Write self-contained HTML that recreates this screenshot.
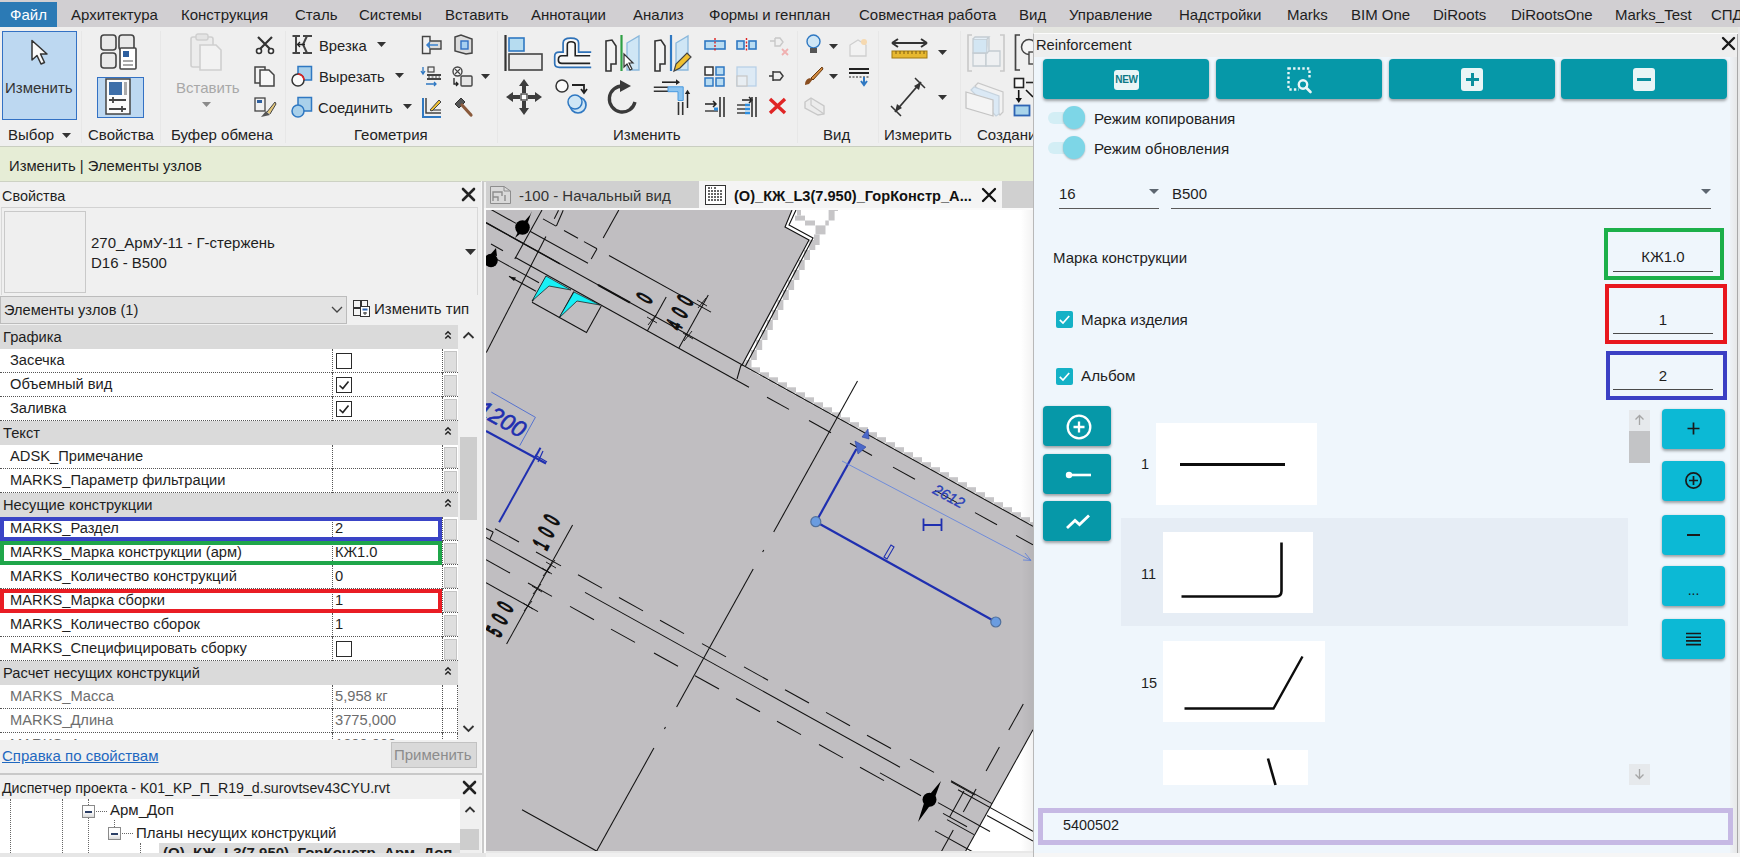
<!DOCTYPE html>
<html><head><meta charset="utf-8">
<style>
*{box-sizing:border-box;margin:0;padding:0}
html,body{width:1740px;height:857px;overflow:hidden;background:#f0f0f0;font-family:"Liberation Sans",sans-serif;color:#1e1e1e}
.a{position:absolute;white-space:nowrap}
.t{position:absolute;white-space:nowrap;font-size:15px;line-height:18px;color:#1e1e1e}
#menu{left:0;top:0;width:1740px;height:27px;background:#d1cfd2}
#ribbon{left:0;top:27px;width:1740px;height:120px;background:#efefef;border-bottom:1px solid #c9cec0}
#ctx{left:0;top:147px;width:1740px;height:35px;background:#e6edd6;border-bottom:1px solid #cdd2c4}
svg{position:absolute;overflow:visible}
</style></head><body>
<div id="menu" class="a">
<div class="a" style="left:0;top:2px;width:57px;height:25px;background:#2b7ab5"></div>
<span class="t" style="left:10px;top:6px;color:#fff">Файл</span>
<span class="t" style="left:71px;top:6px">Архитектура</span>
<span class="t" style="left:181px;top:6px">Конструкция</span>
<span class="t" style="left:295px;top:6px">Сталь</span>
<span class="t" style="left:359px;top:6px">Системы</span>
<span class="t" style="left:445px;top:6px">Вставить</span>
<span class="t" style="left:531px;top:6px">Аннотации</span>
<span class="t" style="left:633px;top:6px">Анализ</span>
<span class="t" style="left:709px;top:6px">Формы и генплан</span>
<span class="t" style="left:859px;top:6px">Совместная работа</span>
<span class="t" style="left:1019px;top:6px">Вид</span>
<span class="t" style="left:1069px;top:6px">Управление</span>
<span class="t" style="left:1179px;top:6px">Надстройки</span>
<span class="t" style="left:1287px;top:6px">Marks</span>
<span class="t" style="left:1351px;top:6px">BIM One</span>
<span class="t" style="left:1433px;top:6px">DiRoots</span>
<span class="t" style="left:1511px;top:6px">DiRootsOne</span>
<span class="t" style="left:1615px;top:6px">Marks_Test</span>
<span class="t" style="left:1711px;top:6px">СПД</span>
</div>
<div id="ctx" class="a"><span class="t" style="left:9px;top:10px;font-size:14.8px">Изменить | Элементы узлов</span></div>
<div id="ribbon" class="a"></div>
<div class="a" style="left:81px;top:31px;width:1px;height:112px;background:#e7e7e7"></div>
<div class="a" style="left:160px;top:31px;width:1px;height:112px;background:#e7e7e7"></div>
<div class="a" style="left:285px;top:31px;width:1px;height:112px;background:#e7e7e7"></div>
<div class="a" style="left:497px;top:31px;width:1px;height:112px;background:#e7e7e7"></div>
<div class="a" style="left:797px;top:31px;width:1px;height:112px;background:#e7e7e7"></div>
<div class="a" style="left:878px;top:31px;width:1px;height:112px;background:#e7e7e7"></div>
<div class="a" style="left:960px;top:31px;width:1px;height:112px;background:#e7e7e7"></div>
<span class="t" style="left:8px;top:126px;font-size:15px;color:#222">Выбор</span>
<svg style="left:62px;top:133px" width="9" height="5" viewBox="0 0 9 5"><path d="M0 0H9L4.5 5Z" fill="#333"/></svg>
<span class="t" style="left:88px;top:126px;font-size:15px;color:#222">Свойства</span>
<span class="t" style="left:171px;top:126px;font-size:15px;color:#222">Буфер обмена</span>
<span class="t" style="left:354px;top:126px;font-size:15px;color:#222">Геометрия</span>
<span class="t" style="left:613px;top:126px;font-size:15px;color:#222">Изменить</span>
<span class="t" style="left:823px;top:126px;font-size:15px;color:#222">Вид</span>
<span class="t" style="left:884px;top:126px;font-size:15px;color:#222">Измерить</span>
<span class="t" style="left:977px;top:126px;font-size:15px;color:#222">Создани</span>
<div class="a" style="left:2px;top:31px;width:75px;height:89px;background:#bdd8f1;border:1.5px solid #3371c4"></div>
<svg style="left:30px;top:39px" width="18" height="27" viewBox="0 0 18 27"><path d="M2 1.5V21L7 16.5L11 25L14.5 23.5L10.5 15H17Z" fill="#fafafa" stroke="#333" stroke-width="1.5" stroke-linejoin="round"/></svg>
<span class="t" style="left:5px;top:79px;font-size:15px;color:#333">Изменить</span>
<svg style="left:100px;top:33px" width="38" height="38" viewBox="0 0 38 38"><g fill="#e9e9e9" stroke="#444" stroke-width="1.6"><rect x="1" y="2" width="15" height="15" rx="3"/><rect x="19" y="2" width="15" height="15" rx="3"/><rect x="1" y="20" width="15" height="15" rx="3"/></g><rect x="20" y="15" width="16" height="21" rx="1" fill="#fff" stroke="#444" stroke-width="1.6"/><rect x="23" y="18" width="6" height="6" fill="#2d5f9e"/><path d="M23 28h10M23 32h10" stroke="#555" stroke-width="1.2"/></svg>
<div class="a" style="left:97px;top:77px;width:47px;height:41px;background:#bdd8f1;border:1.5px solid #3371c4"></div>
<svg style="left:105px;top:78px" width="26" height="37" viewBox="0 0 26 37"><rect x="1" y="1" width="24" height="35" fill="#fbfbfb" stroke="#444" stroke-width="1.5"/><rect x="4" y="4" width="13" height="13" fill="#3d6ea8"/><rect x="19" y="4" width="3" height="13" fill="#aaa"/><path d="M4 22H21M4 31H21M8 19V25M17 28V34" stroke="#444" stroke-width="1.8"/></svg>
<svg style="left:189px;top:33px" width="34" height="38" viewBox="0 0 34 38"><rect x="2" y="4" width="22" height="30" rx="2" fill="#ececec" stroke="#cfcfcf" stroke-width="1.6"/><rect x="7" y="1" width="12" height="6" rx="2" fill="#e4e4e4" stroke="#cfcfcf" stroke-width="1.4"/><path d="M11 12H27L32 17V37H11Z" fill="#f2f2f2" stroke="#cfcfcf" stroke-width="1.6"/></svg>
<span class="t" style="left:176px;top:79px;font-size:15px;color:#a8a8a8">Вставить</span>
<svg style="left:202px;top:102px" width="9" height="5" viewBox="0 0 9 5"><path d="M0 0H9L4.5 5Z" fill="#8a8a8a"/></svg>
<svg style="left:255px;top:35px" width="20" height="19" viewBox="0 0 20 19"><path d="M3 2L16 15M17 2L4 15" stroke="#333" stroke-width="2.2"/><circle cx="4" cy="16" r="2.5" fill="#fff" stroke="#333" stroke-width="1.6"/><circle cx="16" cy="16" r="2.5" fill="#fff" stroke="#333" stroke-width="1.6"/></svg>
<svg style="left:254px;top:66px" width="22" height="21" viewBox="0 0 22 21"><path d="M1 1H11V17H1Z" fill="#f4f4f4" stroke="#444" stroke-width="1.5"/><path d="M6 4H15L20 9V20H6Z" fill="#f7f7f7" stroke="#444" stroke-width="1.5"/></svg>
<svg style="left:254px;top:97px" width="22" height="21" viewBox="0 0 22 21"><rect x="1" y="1" width="10" height="13" fill="#f0f0f0" stroke="#444" stroke-width="1.3"/><rect x="3" y="3" width="5" height="3" fill="#2e5f9f"/><path d="M7 20L12 14L16 18Z" fill="#555"/><path d="M13 15L21 5L22 7L16 17" fill="#e4c77a" stroke="#444" stroke-width="1"/></svg>
<svg style="left:291px;top:34px" width="22" height="21" viewBox="0 0 22 21"><path d="M1.5 2H9M1.5 19H9M5 2V19M12 2H21M12 19H21M16 2L12 10.5L16 19" fill="none" stroke="#444" stroke-width="2"/><path d="M14 10.5H7M9 8L6.5 10.5L9 13" stroke="#222" stroke-width="1.3" fill="none"/></svg>
<span class="t" style="left:319px;top:37px;font-size:14.8px;color:#222">Врезка</span>
<svg style="left:377px;top:42px" width="9" height="5" viewBox="0 0 9 5"><path d="M0 0H9L4.5 5Z" fill="#333"/></svg>
<svg style="left:291px;top:65px" width="22" height="22" viewBox="0 0 22 22"><rect x="7" y="1.5" width="13.5" height="13.5" fill="#a9d0ea" stroke="#2f78c2" stroke-width="1.5"/><circle cx="7" cy="15" r="6" fill="#fafafa" stroke="#333" stroke-width="1.5"/><path d="M7 9A6 6 0 0 1 13 15" stroke="#e02020" stroke-width="1.7" fill="none"/></svg>
<span class="t" style="left:319px;top:68px;font-size:14.8px;color:#222">Вырезать</span>
<svg style="left:395px;top:73px" width="9" height="5" viewBox="0 0 9 5"><path d="M0 0H9L4.5 5Z" fill="#333"/></svg>
<svg style="left:291px;top:96px" width="22" height="22" viewBox="0 0 22 22"><rect x="7" y="1.5" width="13.5" height="13.5" fill="#a9d0ea" stroke="#2f78c2" stroke-width="1.5"/><circle cx="7" cy="15" r="6" fill="#a9d0ea" stroke="#2f78c2" stroke-width="1.5"/></svg>
<span class="t" style="left:318px;top:99px;font-size:14.8px;color:#222">Соединить</span>
<svg style="left:403px;top:104px" width="9" height="5" viewBox="0 0 9 5"><path d="M0 0H9L4.5 5Z" fill="#333"/></svg>
<svg style="left:421px;top:35px" width="21" height="20" viewBox="0 0 21 20"><path d="M1.5 1.5H9V18.5H1.5Z" fill="#f2f2f2" stroke="#444" stroke-width="1.4"/><path d="M9 6H20V14H9" fill="#dcdcdc" stroke="#444" stroke-width="1.4"/><path d="M17 10H6M9 7L6 10L9 13" stroke="#3a82d0" stroke-width="1.5" fill="none"/></svg>
<svg style="left:453px;top:34px" width="20" height="21" viewBox="0 0 20 21"><path d="M2 3L8 1L19 5V19L13 20L2 17Z" fill="#dcdcdc" stroke="#444" stroke-width="1.5"/><rect x="8" y="7" width="7" height="8" fill="#a7cff0" stroke="#2f6fc4" stroke-width="1.4"/></svg>
<svg style="left:421px;top:66px" width="21" height="21" viewBox="0 0 21 21"><path d="M2 1V7M0 5L2 8L4 5" stroke="#2f78c2" stroke-width="1.3" fill="none"/><rect x="7" y="1" width="6" height="5" fill="none" stroke="#444" stroke-width="1.2"/><path d="M6 9H20M6 13H20" stroke="#444" stroke-width="1.8"/><path d="M7 11H19" stroke="#444" stroke-width="1" stroke-dasharray="2 1.5"/><path d="M5 18H15M13 16L15 18L13 20" stroke="#2f78c2" stroke-width="1.3" fill="none"/></svg>
<svg style="left:452px;top:66px" width="21" height="21" viewBox="0 0 21 21"><circle cx="5.5" cy="5.5" r="4.5" fill="#f4f4f4" stroke="#444" stroke-width="1.4"/><path d="M3 3L8 8M8 3L3 8" stroke="#444" stroke-width="1.1"/><rect x="9" y="10" width="11" height="10" rx="1" fill="#e6e6e6" stroke="#444" stroke-width="1.4"/><path d="M2 12V18H6M4 16L6 18L4 20" stroke="#222" stroke-width="1.3" fill="none"/></svg>
<svg style="left:481px;top:74px" width="9" height="5" viewBox="0 0 9 5"><path d="M0 0H9L4.5 5Z" fill="#333"/></svg>
<svg style="left:421px;top:97px" width="21" height="21" viewBox="0 0 21 21"><path d="M2 1V20H20" stroke="#2f78c2" stroke-width="2" fill="none"/><path d="M5 1V16H20" stroke="#444" stroke-width="1.5" fill="none"/><path d="M9 13H20" stroke="#444" stroke-width="1.2"/><path d="M9 13L18 3L20 5L11 14Z" fill="#f0c030" stroke="#444" stroke-width="1"/></svg>
<svg style="left:453px;top:97px" width="20" height="21" viewBox="0 0 20 21"><path d="M2 7L8 1L12 5L6 11Z" fill="#555" stroke="#333" stroke-width="1"/><path d="M9 8L18 18" stroke="#8a5a3c" stroke-width="3.2" stroke-linecap="round"/></svg>
<svg style="left:504px;top:34px" width="38" height="38" viewBox="0 0 38 38"><path d="M1.5 1V37" stroke="#333" stroke-width="2.2"/><rect x="5" y="4" width="15" height="13" fill="#b6dcf0" stroke="#2f78c2" stroke-width="1.6"/><rect x="5" y="20" width="33" height="16" fill="#ececec" stroke="#444" stroke-width="1.6"/></svg>
<svg style="left:553px;top:37px" width="40" height="32" viewBox="0 0 40 32"><path d="M38.2 15.1H25.6V6.1Q25.6 1.1 17.7 1.1Q10.1 1.1 10.1 6.1V15.1H6.2Q1.7 15.1 1.7 19.3V26.6Q1.7 30.3 6.2 30.3H38.2Z" fill="#f7f7f7" stroke="none"/><path d="M38.2 15.1H25.6V6.1Q25.6 1.1 17.7 1.1Q10.1 1.1 10.1 6.1V15.1H6.2Q1.7 15.1 1.7 19.3V26.6Q1.7 30.3 6.2 30.3H38.2" fill="none" stroke="#2f72b8" stroke-width="1.7"/><path d="M37.2 18.7H22.2V7.7Q22.2 4.8 18 4.8Q14.3 4.8 14.3 7.7V18.7H8.8Q5.4 18.7 5.4 22.4V23.5Q5.4 26.4 8.8 26.4H37.2" fill="none" stroke="#222" stroke-width="1.6"/></svg>
<svg style="left:604px;top:34px" width="37" height="38" viewBox="0 0 37 38"><path d="M2 7L8 6L12 12V30H7V37H2Z" fill="#f2f2f2" stroke="#333" stroke-width="1.6"/><path d="M17.5 1V37" stroke="#2ea043" stroke-width="2.2"/><path d="M23 9L35 2V36L23 36Z" fill="#cfe6f5" stroke="#8ab8dc" stroke-width="1.3"/><path d="M20 20V33L23 30L26 36L28 35L25 29H29Z" fill="#fff" stroke="#333" stroke-width="1.2"/></svg>
<svg style="left:653px;top:34px" width="38" height="38" viewBox="0 0 38 38"><path d="M2 7L8 6L12 12V30H7V37H2Z" fill="#f2f2f2" stroke="#333" stroke-width="1.6"/><path d="M18 1V37" stroke="#2f78c2" stroke-width="2.2"/><path d="M23 9L35 2V36L23 36Z" fill="#cfe6f5" stroke="#8ab8dc" stroke-width="1.3"/><path d="M21 37L23 30L34 19L38 23L27 34Z" fill="#f0c030" stroke="#444" stroke-width="1.2"/></svg>
<svg style="left:505px;top:78px" width="38" height="38" viewBox="0 0 38 38"><path d="M19 1L24 8H21V15H17V8H14ZM19 37L14 30H17V23H21V30H24ZM1 19L8 14V17H15V21H8V24ZM37 19L30 24V21H23V17H30V14Z" fill="#3d3d3d"/><rect x="16" y="16" width="6" height="6" fill="#fff" stroke="#3d3d3d" stroke-width="1.3"/></svg>
<svg style="left:555px;top:79px" width="36" height="36" viewBox="0 0 36 36"><circle cx="7" cy="7" r="6" fill="#fafafa" stroke="#333" stroke-width="1.5"/><path d="M17 6H29V13M26 10L29 14L32 10" stroke="#222" stroke-width="1.8" fill="none"/><circle cx="23" cy="26" r="8" fill="#cfe6f5" stroke="#2f78c2" stroke-width="1.7"/><circle cx="20" cy="23" r="7" fill="#cfe6f5" stroke="#2f78c2" stroke-width="1.5"/></svg>
<svg style="left:606px;top:80px" width="34" height="35" viewBox="0 0 34 35"><path d="M29 22A13 13 0 1 1 17 6" fill="none" stroke="#3a3a3a" stroke-width="3.3"/><path d="M14 0L25 6L14 12Z" fill="#3a3a3a"/></svg>
<svg style="left:652px;top:79px" width="40" height="38" viewBox="0 0 40 38"><path d="M10 3.2H25" stroke="#222" stroke-width="1.6"/><path d="M24 0.3L28 3.2L24 6.1Z" fill="#222"/><path d="M1.8 8.3H16M1.8 12.2H16" stroke="#333" stroke-width="1.5"/><path d="M16 7.8H31.2V21.5H26V12.7H16Z" fill="#8cc4f0" stroke="#4a9be0" stroke-width="1"/><path d="M26.5 23V36M30.7 23V36" stroke="#333" stroke-width="1.6"/><path d="M35.5 29V13" stroke="#222" stroke-width="1.5"/><path d="M32.8 15L35.5 10.8L38.2 15Z" fill="#222"/></svg>
<svg style="left:704px;top:38px" width="22" height="14" viewBox="0 0 22 14"><rect x="1" y="3" width="20" height="8" fill="#b9dcf2" stroke="#2f78c2" stroke-width="1.6"/><path d="M11 0V14" stroke="#e02020" stroke-width="1.4" stroke-dasharray="2 1.5"/></svg>
<svg style="left:736px;top:38px" width="21" height="14" viewBox="0 0 21 14"><rect x="1" y="3" width="7" height="8" fill="#b9dcf2" stroke="#2f78c2" stroke-width="1.6"/><rect x="13" y="3" width="7" height="8" fill="#b9dcf2" stroke="#2f78c2" stroke-width="1.6"/><path d="M10.5 0V14" stroke="#e02020" stroke-width="1.4" stroke-dasharray="2 1.5"/></svg>
<svg style="left:769px;top:37px" width="22" height="20" viewBox="0 0 22 20"><path d="M1 4H6M6 1V9H11L14 5L11 1H6" fill="none" stroke="#c8c8c8" stroke-width="1.4"/><path d="M13 12L19 18M19 12L13 18" stroke="#f0b0b0" stroke-width="1.8"/></svg>
<svg style="left:704px;top:66px" width="21" height="21" viewBox="0 0 21 21"><rect x="1" y="1" width="8" height="8" fill="#fafafa" stroke="#333" stroke-width="1.5"/><rect x="12" y="1" width="8" height="8" fill="#b9dcf2" stroke="#2f78c2" stroke-width="1.5"/><rect x="1" y="12" width="8" height="8" fill="#b9dcf2" stroke="#2f78c2" stroke-width="1.5"/><rect x="12" y="12" width="8" height="8" fill="#b9dcf2" stroke="#2f78c2" stroke-width="1.5"/></svg>
<svg style="left:736px;top:66px" width="21" height="21" viewBox="0 0 21 21"><rect x="1" y="1" width="19" height="19" fill="#ddeaf5" stroke="#b8d0e6" stroke-width="1.3"/><rect x="1" y="10" width="10" height="10" fill="#e8eef3" stroke="#c6c6c6" stroke-width="1.2"/></svg>
<svg style="left:768px;top:69px" width="18" height="14" viewBox="0 0 18 14"><path d="M1 7H5M5 2V12M5 3H12L15 7L12 11H5" fill="none" stroke="#3a3a3a" stroke-width="1.5"/></svg>
<svg style="left:704px;top:96px" width="22" height="21" viewBox="0 0 22 21"><path d="M1 8H12M9 5L12 8L9 11" stroke="#222" stroke-width="1.5" fill="none"/><path d="M1 15H14" stroke="#444" stroke-width="1.5"/><path d="M10 13H14" stroke="#2f8fe0" stroke-width="3"/><path d="M16 1V21M20 1V21" stroke="#333" stroke-width="1.6"/></svg>
<svg style="left:736px;top:96px" width="22" height="21" viewBox="0 0 22 21"><path d="M6 4H16M13 1L16 4L13 7" stroke="#222" stroke-width="1.5" fill="none"/><path d="M1 9H13M1 13H13M1 17H13" stroke="#444" stroke-width="1.4"/><path d="M9 9H14M9 13H14M9 17H14" stroke="#2f8fe0" stroke-width="2.4"/><path d="M16 1V21M20 1V21" stroke="#333" stroke-width="1.6"/></svg>
<svg style="left:768px;top:97px" width="19" height="18" viewBox="0 0 19 18"><path d="M2 2L17 16M17 2L2 16" stroke="#e02525" stroke-width="3.4"/></svg>
<svg style="left:805px;top:34px" width="17" height="22" viewBox="0 0 17 22"><circle cx="8.5" cy="7.5" r="6.5" fill="#cfe6f5" stroke="#2f78c2" stroke-width="1.4"/><path d="M5 14H12V19H5Z" fill="#555"/></svg>
<svg style="left:829px;top:44px" width="9" height="5" viewBox="0 0 9 5"><path d="M0 0H9L4.5 5Z" fill="#333"/></svg>
<svg style="left:848px;top:38px" width="22" height="19" viewBox="0 0 22 19"><path d="M2 18V7L10 2L18 7V18Z" fill="#f2f2f2" stroke="#cfcfcf" stroke-width="1.3"/><circle cx="16" cy="4" r="3" fill="#f6d9b0"/></svg>
<svg style="left:804px;top:65px" width="20" height="21" viewBox="0 0 20 21"><path d="M1 20C1 14 5 12 9 14L5 19Z" fill="#8a4e20"/><path d="M7 13L18 2L19 4L9 15Z" fill="#d08a40" stroke="#6a3a10" stroke-width="1"/></svg>
<svg style="left:829px;top:74px" width="9" height="5" viewBox="0 0 9 5"><path d="M0 0H9L4.5 5Z" fill="#333"/></svg>
<svg style="left:848px;top:67px" width="22" height="19" viewBox="0 0 22 19"><path d="M1 2H21M1 6H21" stroke="#222" stroke-width="2"/><path d="M1 10H21" stroke="#222" stroke-width="1.2" stroke-dasharray="2 1.5"/><path d="M16 10V17M13 14L16 18L19 14" stroke="#2f78c2" stroke-width="2" fill="none"/></svg>
<svg style="left:803px;top:96px" width="23" height="20" viewBox="0 0 23 20"><path d="M2 6L8 2L21 10V18L15 19L2 12Z" fill="#ececec" stroke="#c8c8c8" stroke-width="1.4"/><path d="M8 2V9L21 18" fill="none" stroke="#c8c8c8" stroke-width="1.2"/></svg>
<svg style="left:890px;top:38px" width="39" height="22" viewBox="0 0 39 22"><path d="M2 5H37M2 5L8 1M2 5L8 9M37 5L31 1M37 5L31 9" stroke="#333" stroke-width="2" fill="none"/><rect x="2" y="13" width="35" height="7" fill="#e7b830" stroke="#a07810" stroke-width="1"/><path d="M6 13V16M10 13V16M14 13V16M18 13V16M22 13V16M26 13V16M30 13V16M34 13V16" stroke="#7a5a10" stroke-width="1"/></svg>
<svg style="left:938px;top:50px" width="9" height="5" viewBox="0 0 9 5"><path d="M0 0H9L4.5 5Z" fill="#333"/></svg>
<svg style="left:891px;top:78px" width="34" height="38" viewBox="0 0 34 38"><path d="M4 34L30 4" stroke="#333" stroke-width="1.8"/><path d="M4 34L6 26L11 30ZM30 4L28 12L23 8Z" fill="#333"/><path d="M0 28L10 38M24 0L34 10" stroke="#333" stroke-width="1.5"/></svg>
<svg style="left:938px;top:95px" width="9" height="5" viewBox="0 0 9 5"><path d="M0 0H9L4.5 5Z" fill="#333"/></svg>
<svg style="left:966px;top:34px" width="40" height="38" viewBox="0 0 40 38"><path d="M6 1H2V37H6M34 1H38V37H34" stroke="#c9c9c9" stroke-width="1.6" fill="none"/><g stroke="#c4ccd2" stroke-width="1.3"><path d="M7 32V19H20V32Z" fill="#eef0f2"/><path d="M20 32V17H34V32Z" fill="#eef0f2"/><path d="M7 19V5H21V19Z" fill="#d3e6f3"/><path d="M7 5L9 3H23L21 5M21 19L23 17V3" fill="#e4eef6"/></g></svg>
<svg style="left:965px;top:78px" width="40" height="40" viewBox="0 0 40 40"><path d="M10 8L13 5L38 14V34L35 37Z" fill="#f2f2f2" stroke="#c8c8c8" stroke-width="1.2"/><path d="M6 12L9 9L34 18V36L31 38Z" fill="#dbe9f5" stroke="#c6d3de" stroke-width="1.2"/><path d="M1 14L28 22V38L1 30Z" fill="#f4f4f4" stroke="#c4c4c4" stroke-width="1.3"/></svg>
<svg style="left:1014px;top:34px" width="20" height="38" viewBox="0 0 20 38"><path d="M6 1H1.5V36H6" stroke="#444" stroke-width="1.7" fill="none"/><circle cx="15" cy="13" r="7.5" fill="#f5f5f5" stroke="#444" stroke-width="1.5"/><rect x="15" y="18" width="6" height="12" fill="#f0f0f0" stroke="#444" stroke-width="1.4"/></svg>
<svg style="left:1013px;top:77px" width="21" height="40" viewBox="0 0 21 40"><rect x="1.5" y="1.5" width="9" height="9" fill="#fafafa" stroke="#222" stroke-width="1.6"/><path d="M13 5.5H21" stroke="#222" stroke-width="1.6"/><path d="M5.7 13V23" stroke="#111" stroke-width="1.6"/><path d="M2.5 21L5.7 26L9 21Z" fill="#111"/><path d="M13 13L20 20" stroke="#111" stroke-width="1.6"/><rect x="1.5" y="28.5" width="15" height="10" fill="#a9d4ea" stroke="#2e64b4" stroke-width="1.8"/></svg>
<div class="a" style="left:0;top:182px;width:482px;height:675px;background:#f0f0f0"></div>
<div class="a" style="left:481px;top:181px;width:1px;height:676px;background:#f6f6f6"></div>
<div class="a" style="left:482px;top:181px;width:2px;height:676px;background:#cacaca"></div>
<div class="a" style="left:484px;top:208px;width:2px;height:645px;background:#fbfbfb"></div>
<span class="t" style="left:2px;top:187px;font-size:14.4px">Свойства</span>
<svg style="left:462px;top:188px" width="13" height="13" viewBox="0 0 13 13"><path d="M1 1L12 12M12 1L1 12" stroke="#222" stroke-width="2.6" stroke-linecap="round"/></svg>
<div class="a" style="left:1px;top:207px;width:477px;height:88px;border-top:1px solid #d2d2d2;border-left:1px solid #d8d8d8;border-right:1px solid #d8d8d8"></div>
<div class="a" style="left:4px;top:211px;width:82px;height:82px;border:1px solid #c9c9c9;background:#efefef"></div>
<span class="t" style="left:91px;top:234px">270_АрмУ-11 - Г-стержень</span>
<span class="t" style="left:91px;top:254px">D16 - B500</span>
<svg style="left:465px;top:249px" width="11" height="6"><path d="M0 0H11L5.5 6Z" fill="#333"/></svg>
<div class="a" style="left:0;top:296px;width:347px;height:28px;background:#e3e3e3;border:1px solid #bcbcbc"></div>
<span class="t" style="left:4px;top:301px;font-size:14.6px">Элементы узлов (1)</span>
<svg style="left:331px;top:306px" width="12" height="7"><path d="M1 1L6 6L11 1" stroke="#444" stroke-width="1.3" fill="none"/></svg>
<svg style="left:353px;top:300px" width="17" height="17" viewBox="0 0 17 17"><rect x="0.5" y="0.5" width="7" height="7" fill="#f4f4f4" stroke="#333"/><rect x="0.5" y="8.5" width="7" height="7" fill="#f4f4f4" stroke="#333"/><rect x="8.5" y="0.5" width="6" height="7" fill="#f4f4f4" stroke="#333"/><rect x="7.5" y="6.5" width="9" height="10" fill="#fff" stroke="#333"/><rect x="9.5" y="8.5" width="5" height="2" fill="#2d64b0"/><path d="M10 13h4M12 12v3" stroke="#333" stroke-width="1"/></svg>
<span class="t" style="left:374px;top:300px;font-size:15px">Изменить тип</span>
<div class="a" style="left:0;top:325px;width:458px;height:415px;overflow:hidden;background:#fff">
<div class="a" style="left:0;top:0px;width:458px;height:24px;background:#dadada"></div>
<span class="t" style="left:3px;top:3px;font-size:14.7px">Графика</span>
<svg style="left:444px;top:5px" width="8" height="10" viewBox="0 0 8 10"><path d="M1.3 4.5L4 1.8L6.7 4.5M1.3 8.5L4 5.8L6.7 8.5" stroke="#222" stroke-width="1.5" fill="none"/></svg>
<div class="a" style="left:0;top:24px;width:458px;height:24px;background:#fff;border-bottom:1px dotted #555"></div>
<div class="a" style="left:332px;top:24px;width:1px;height:24px;border-left:1px dotted #555"></div>
<div class="a" style="left:442px;top:24px;width:1px;height:24px;border-left:1px dotted #555"></div>
<div class="a" style="left:444px;top:26px;width:13px;height:21px;background:#dedede;border:1px solid #c4c4c4"></div>
<span class="t" style="left:10px;top:26px;font-size:14.7px;color:#1e1e1e">Засечка</span>
<div class="a" style="left:336px;top:28px;width:16px;height:16px;border:1.6px solid #2a2a2a;background:#fff"></div>
<div class="a" style="left:0;top:48px;width:458px;height:24px;background:#fff;border-bottom:1px dotted #555"></div>
<div class="a" style="left:332px;top:48px;width:1px;height:24px;border-left:1px dotted #555"></div>
<div class="a" style="left:442px;top:48px;width:1px;height:24px;border-left:1px dotted #555"></div>
<div class="a" style="left:444px;top:50px;width:13px;height:21px;background:#dedede;border:1px solid #c4c4c4"></div>
<span class="t" style="left:10px;top:50px;font-size:14.7px;color:#1e1e1e">Объемный вид</span>
<div class="a" style="left:336px;top:52px;width:16px;height:16px;border:1.6px solid #2a2a2a;background:#fff"></div>
<svg style="left:338px;top:54px" width="12" height="12"><path d="M1.5 6.5L4.8 9.5L10.5 2.5" stroke="#222" stroke-width="1.6" fill="none"/></svg>
<div class="a" style="left:0;top:72px;width:458px;height:24px;background:#fff;border-bottom:1px dotted #555"></div>
<div class="a" style="left:332px;top:72px;width:1px;height:24px;border-left:1px dotted #555"></div>
<div class="a" style="left:442px;top:72px;width:1px;height:24px;border-left:1px dotted #555"></div>
<div class="a" style="left:444px;top:74px;width:13px;height:21px;background:#dedede;border:1px solid #c4c4c4"></div>
<span class="t" style="left:10px;top:74px;font-size:14.7px;color:#1e1e1e">Заливка</span>
<div class="a" style="left:336px;top:76px;width:16px;height:16px;border:1.6px solid #2a2a2a;background:#fff"></div>
<svg style="left:338px;top:78px" width="12" height="12"><path d="M1.5 6.5L4.8 9.5L10.5 2.5" stroke="#222" stroke-width="1.6" fill="none"/></svg>
<div class="a" style="left:0;top:96px;width:458px;height:24px;background:#dadada"></div>
<span class="t" style="left:3px;top:99px;font-size:14.7px">Текст</span>
<svg style="left:444px;top:101px" width="8" height="10" viewBox="0 0 8 10"><path d="M1.3 4.5L4 1.8L6.7 4.5M1.3 8.5L4 5.8L6.7 8.5" stroke="#222" stroke-width="1.5" fill="none"/></svg>
<div class="a" style="left:0;top:120px;width:458px;height:24px;background:#fff;border-bottom:1px dotted #555"></div>
<div class="a" style="left:332px;top:120px;width:1px;height:24px;border-left:1px dotted #555"></div>
<div class="a" style="left:442px;top:120px;width:1px;height:24px;border-left:1px dotted #555"></div>
<div class="a" style="left:444px;top:122px;width:13px;height:21px;background:#dedede;border:1px solid #c4c4c4"></div>
<span class="t" style="left:10px;top:122px;font-size:14.7px;color:#1e1e1e">ADSK_Примечание</span>
<div class="a" style="left:0;top:144px;width:458px;height:24px;background:#fff;border-bottom:1px dotted #555"></div>
<div class="a" style="left:332px;top:144px;width:1px;height:24px;border-left:1px dotted #555"></div>
<div class="a" style="left:442px;top:144px;width:1px;height:24px;border-left:1px dotted #555"></div>
<div class="a" style="left:444px;top:146px;width:13px;height:21px;background:#dedede;border:1px solid #c4c4c4"></div>
<span class="t" style="left:10px;top:146px;font-size:14.7px;color:#1e1e1e">MARKS_Параметр фильтрации</span>
<div class="a" style="left:0;top:168px;width:458px;height:24px;background:#dadada"></div>
<span class="t" style="left:3px;top:171px;font-size:14.7px">Несущие конструкции</span>
<svg style="left:444px;top:173px" width="8" height="10" viewBox="0 0 8 10"><path d="M1.3 4.5L4 1.8L6.7 4.5M1.3 8.5L4 5.8L6.7 8.5" stroke="#222" stroke-width="1.5" fill="none"/></svg>
<div class="a" style="left:0;top:192px;width:458px;height:24px;background:#fff;border-bottom:1px dotted #555"></div>
<div class="a" style="left:332px;top:192px;width:1px;height:24px;border-left:1px dotted #555"></div>
<div class="a" style="left:442px;top:192px;width:1px;height:24px;border-left:1px dotted #555"></div>
<div class="a" style="left:444px;top:194px;width:13px;height:21px;background:#dedede;border:1px solid #c4c4c4"></div>
<span class="t" style="left:10px;top:194px;font-size:14.7px;color:#1e1e1e">MARKS_Раздел</span>
<span class="t" style="left:335px;top:194px;font-size:14.7px;color:#1e1e1e">2</span>
<div class="a" style="left:0;top:192px;width:442px;height:24px;border:4.5px solid #3a44c6"></div>
<div class="a" style="left:0;top:216px;width:458px;height:24px;background:#fff;border-bottom:1px dotted #555"></div>
<div class="a" style="left:332px;top:216px;width:1px;height:24px;border-left:1px dotted #555"></div>
<div class="a" style="left:442px;top:216px;width:1px;height:24px;border-left:1px dotted #555"></div>
<div class="a" style="left:444px;top:218px;width:13px;height:21px;background:#dedede;border:1px solid #c4c4c4"></div>
<span class="t" style="left:10px;top:218px;font-size:14.7px;color:#1e1e1e">MARKS_Марка конструкции (арм)</span>
<span class="t" style="left:335px;top:218px;font-size:14.7px;color:#1e1e1e">КЖ1.0</span>
<div class="a" style="left:0;top:216px;width:442px;height:24px;border:4.5px solid #1fa64a"></div>
<div class="a" style="left:0;top:240px;width:458px;height:24px;background:#fff;border-bottom:1px dotted #555"></div>
<div class="a" style="left:332px;top:240px;width:1px;height:24px;border-left:1px dotted #555"></div>
<div class="a" style="left:442px;top:240px;width:1px;height:24px;border-left:1px dotted #555"></div>
<div class="a" style="left:444px;top:242px;width:13px;height:21px;background:#dedede;border:1px solid #c4c4c4"></div>
<span class="t" style="left:10px;top:242px;font-size:14.7px;color:#1e1e1e">MARKS_Количество конструкций</span>
<span class="t" style="left:335px;top:242px;font-size:14.7px;color:#1e1e1e">0</span>
<div class="a" style="left:0;top:264px;width:458px;height:24px;background:#fff;border-bottom:1px dotted #555"></div>
<div class="a" style="left:332px;top:264px;width:1px;height:24px;border-left:1px dotted #555"></div>
<div class="a" style="left:442px;top:264px;width:1px;height:24px;border-left:1px dotted #555"></div>
<div class="a" style="left:444px;top:266px;width:13px;height:21px;background:#dedede;border:1px solid #c4c4c4"></div>
<span class="t" style="left:10px;top:266px;font-size:14.7px;color:#1e1e1e">MARKS_Марка сборки</span>
<span class="t" style="left:335px;top:266px;font-size:14.7px;color:#1e1e1e">1</span>
<div class="a" style="left:0;top:264px;width:442px;height:24px;border:4.5px solid #e91d24"></div>
<div class="a" style="left:0;top:288px;width:458px;height:24px;background:#fff;border-bottom:1px dotted #555"></div>
<div class="a" style="left:332px;top:288px;width:1px;height:24px;border-left:1px dotted #555"></div>
<div class="a" style="left:442px;top:288px;width:1px;height:24px;border-left:1px dotted #555"></div>
<div class="a" style="left:444px;top:290px;width:13px;height:21px;background:#dedede;border:1px solid #c4c4c4"></div>
<span class="t" style="left:10px;top:290px;font-size:14.7px;color:#1e1e1e">MARKS_Количество сборок</span>
<span class="t" style="left:335px;top:290px;font-size:14.7px;color:#1e1e1e">1</span>
<div class="a" style="left:0;top:312px;width:458px;height:24px;background:#fff;border-bottom:1px dotted #555"></div>
<div class="a" style="left:332px;top:312px;width:1px;height:24px;border-left:1px dotted #555"></div>
<div class="a" style="left:442px;top:312px;width:1px;height:24px;border-left:1px dotted #555"></div>
<div class="a" style="left:444px;top:314px;width:13px;height:21px;background:#dedede;border:1px solid #c4c4c4"></div>
<span class="t" style="left:10px;top:314px;font-size:14.7px;color:#1e1e1e">MARKS_Специфицировать сборку</span>
<div class="a" style="left:336px;top:316px;width:16px;height:16px;border:1.6px solid #2a2a2a;background:#fff"></div>
<div class="a" style="left:0;top:336px;width:458px;height:24px;background:#dadada"></div>
<span class="t" style="left:3px;top:339px;font-size:14.7px">Расчет несущих конструкций</span>
<svg style="left:444px;top:341px" width="8" height="10" viewBox="0 0 8 10"><path d="M1.3 4.5L4 1.8L6.7 4.5M1.3 8.5L4 5.8L6.7 8.5" stroke="#222" stroke-width="1.5" fill="none"/></svg>
<div class="a" style="left:0;top:360px;width:458px;height:24px;background:#fff;border-bottom:1px dotted #555"></div>
<div class="a" style="left:332px;top:360px;width:1px;height:24px;border-left:1px dotted #555"></div>
<div class="a" style="left:442px;top:360px;width:1px;height:24px;border-left:1px dotted #555"></div>
<div class="a" style="left:457px;top:360px;width:1px;height:24px;border-left:1px dotted #555"></div>
<span class="t" style="left:10px;top:362px;font-size:14.7px;color:#6d6d6d">MARKS_Масса</span>
<span class="t" style="left:335px;top:362px;font-size:14.7px;color:#6d6d6d">5,958 кг</span>
<div class="a" style="left:0;top:384px;width:458px;height:24px;background:#fff;border-bottom:1px dotted #555"></div>
<div class="a" style="left:332px;top:384px;width:1px;height:24px;border-left:1px dotted #555"></div>
<div class="a" style="left:442px;top:384px;width:1px;height:24px;border-left:1px dotted #555"></div>
<div class="a" style="left:457px;top:384px;width:1px;height:24px;border-left:1px dotted #555"></div>
<span class="t" style="left:10px;top:386px;font-size:14.7px;color:#6d6d6d">MARKS_Длина</span>
<span class="t" style="left:335px;top:386px;font-size:14.7px;color:#6d6d6d">3775,000</span>
<div class="a" style="left:0;top:408px;width:458px;height:24px;background:#fff;border-bottom:1px dotted #555"></div>
<div class="a" style="left:332px;top:408px;width:1px;height:24px;border-left:1px dotted #555"></div>
<div class="a" style="left:442px;top:408px;width:1px;height:24px;border-left:1px dotted #555"></div>
<div class="a" style="left:457px;top:408px;width:1px;height:24px;border-left:1px dotted #555"></div>
<span class="t" style="left:10px;top:410px;font-size:14.7px;color:#6d6d6d">MARKS_А</span>
<span class="t" style="left:335px;top:410px;font-size:14.7px;color:#6d6d6d">1200,000</span>
</div>
<div class="a" style="left:458px;top:325px;width:20px;height:415px;background:#f0f0f0"></div>
<svg style="left:462px;top:331px" width="13" height="8"><path d="M1.5 7L6.5 2L11.5 7" stroke="#333" stroke-width="1.8" fill="none"/></svg>
<svg style="left:462px;top:725px" width="13" height="8"><path d="M1.5 1L6.5 6L11.5 1" stroke="#333" stroke-width="1.8" fill="none"/></svg>
<div class="a" style="left:460px;top:437px;width:17px;height:83px;background:#cdcdcd"></div>
<span class="t" style="left:2px;top:747px;font-size:15px;color:#1f68c0;text-decoration:underline">Справка по свойствам</span>
<div class="a" style="left:391px;top:742px;width:86px;height:26px;background:#d9d9d9;border:1px solid #c2c2c2"></div>
<span class="t" style="left:394px;top:746px;font-size:15px;color:#8c8c8c">Применить</span>
<div class="a" style="left:0;top:773px;width:482px;height:2px;background:#c9c9c9"></div>
<span class="t" style="left:2px;top:779px;font-size:14.2px">Диспетчер проекта - K01_KP_П_R19_d.surovtsev43CYU.rvt</span>
<svg style="left:463px;top:781px" width="13" height="13" viewBox="0 0 13 13"><path d="M1 1L12 12M12 1L1 12" stroke="#222" stroke-width="2.6" stroke-linecap="round"/></svg>
<div class="a" style="left:0;top:799px;width:460px;height:54px;background:#fff"></div>
<div class="a" style="left:10px;top:799px;width:1px;height:54px;border-left:1px dotted #666"></div>
<div class="a" style="left:62px;top:799px;width:1px;height:54px;border-left:1px dotted #666"></div>
<div class="a" style="left:88px;top:799px;width:1px;height:6px;border-left:1px dotted #666"></div>
<div class="a" style="left:88px;top:818px;width:1px;height:35px;border-left:1px dotted #666"></div>
<div class="a" style="left:114px;top:820px;width:1px;height:7px;border-left:1px dotted #666"></div>
<div class="a" style="left:140px;top:843px;width:1px;height:10px;border-left:1px dotted #666"></div>
<div class="a" style="left:82px;top:805px;width:13px;height:13px;border:1px solid #8a8a8a;background:linear-gradient(#fdfdfd 55%,#d9d9d9)"></div><div class="a" style="left:85px;top:811px;width:7px;height:1.5px;background:#2b3f66"></div>
<div class="a" style="left:96px;top:811px;width:11px;height:1px;border-top:1px dotted #666"></div>
<span class="t" style="left:110px;top:801px;font-size:15px">Арм_Доп</span>
<div class="a" style="left:108px;top:827px;width:13px;height:13px;border:1px solid #8a8a8a;background:linear-gradient(#fdfdfd 55%,#d9d9d9)"></div><div class="a" style="left:111px;top:833px;width:7px;height:1.5px;background:#2b3f66"></div>
<div class="a" style="left:122px;top:833px;width:11px;height:1px;border-top:1px dotted #666"></div>
<span class="t" style="left:136px;top:824px;font-size:15px">Планы несущих конструкций</span>
<div class="a" style="left:159px;top:843px;width:301px;height:10px;background:#dcdcdc;overflow:hidden"><span class="t" style="left:4px;top:1px;font-size:15px;font-weight:bold">(О)_КЖ_L3(7.950)_ГорКонстр_Арм_Доп_Пл</span></div>
<div class="a" style="left:460px;top:799px;width:19px;height:54px;background:#f0f0f0"></div>
<svg style="left:464px;top:805px" width="12" height="8"><path d="M1.5 7L6 2.5L10.5 7" stroke="#333" stroke-width="1.8" fill="none"/></svg>
<div class="a" style="left:460px;top:829px;width:19px;height:21px;background:#cdcdcd"></div>
<div class="a" style="left:0;top:853px;width:486px;height:4px;background:#e6e6e6"></div>
<div class="a" style="left:486px;top:181px;width:549px;height:28px;background:#d0d0d0"></div>
<div class="a" style="left:699px;top:181px;width:303px;height:28px;background:#f4f4f4"></div>
<svg style="left:490px;top:186px" width="21" height="18" viewBox="0 0 21 18"><path d="M0.5 0.5H14L20.5 5V17.5H0.5Z" fill="#d9d9d9" stroke="#8d8d8d"/><path d="M14 0.5V5H20.5" fill="none" stroke="#8d8d8d"/><path d="M3 15V6H12V10M3 11H8V15M15 9V15" fill="none" stroke="#8d8d8d" stroke-width="1.4"/></svg>
<span class="t" style="left:519px;top:187px;font-size:15px;color:#333">-100 - Начальный вид</span>
<svg style="left:705px;top:185px" width="21" height="20" viewBox="0 0 21 20"><rect x="0.5" y="0.5" width="20" height="19" fill="#fff" stroke="#333"/><path d="M3 3h4M9 3h2M3 6h15M3 9h15M3 12h15M3 15h15" stroke="#333" stroke-width="1.5" stroke-dasharray="2 1"/></svg>
<span class="t" style="left:734px;top:187px;font-size:14.6px;font-weight:bold;color:#111">(О)_КЖ_L3(7.950)_ГорКонстр_А...</span>
<svg style="left:982px;top:188px" width="14" height="14" viewBox="0 0 14 14"><path d="M1 1L13 13M13 1L1 13" stroke="#111" stroke-width="2.3" stroke-linecap="round"/></svg>
<div class="a" style="left:1002px;top:181px;width:31px;height:28px;background:#d0d0d0"></div>
<div class="a" style="left:486px;top:208px;width:547px;height:2px;background:#fafafa"></div>
<svg style="left:0;top:0" width="1740" height="857" viewBox="0 0 1740 857">
<defs><clipPath id="dc"><rect x="486" y="210" width="547" height="643"/></clipPath><pattern id="chk" width="4" height="4" patternUnits="userSpaceOnUse"><rect width="4" height="4" fill="#fff"/><rect width="2" height="2" fill="#c6c6c6"/><rect x="2" y="2" width="2" height="2" fill="#c6c6c6"/></pattern></defs>
<g clip-path="url(#dc)">
<rect x="486" y="210" width="547" height="643" fill="#fff"/>
<g fill="#c6c5c7"><rect x="742" y="362.3" width="9" height="5.5"/><rect x="751" y="367.3" width="9" height="5.5"/><rect x="760" y="372.3" width="9" height="5.5"/><rect x="769" y="377.3" width="9" height="5.5"/><rect x="778" y="382.3" width="9" height="5.5"/><rect x="787" y="387.3" width="9" height="5.5"/><rect x="796" y="392.3" width="9" height="5.5"/><rect x="805" y="397.3" width="9" height="5.5"/><rect x="814" y="402.3" width="9" height="5.5"/><rect x="823" y="407.3" width="9" height="5.5"/><rect x="832" y="412.3" width="9" height="5.5"/><rect x="841" y="417.3" width="9" height="5.5"/><rect x="850" y="422.2" width="9" height="5.5"/><rect x="859" y="427.2" width="9" height="5.5"/><rect x="868" y="432.2" width="9" height="5.5"/><rect x="877" y="437.2" width="9" height="5.5"/><rect x="886" y="442.2" width="9" height="5.5"/><rect x="895" y="447.2" width="9" height="5.5"/><rect x="904" y="452.2" width="9" height="5.5"/><rect x="913" y="457.2" width="9" height="5.5"/><rect x="922" y="462.2" width="9" height="5.5"/><rect x="931" y="467.2" width="9" height="5.5"/><rect x="940" y="472.2" width="9" height="5.5"/><rect x="949" y="477.2" width="9" height="5.5"/><rect x="958" y="482.2" width="9" height="5.5"/><rect x="967" y="487.2" width="9" height="5.5"/><rect x="976" y="492.2" width="9" height="5.5"/><rect x="985" y="497.2" width="9" height="5.5"/><rect x="994" y="502.2" width="9" height="5.5"/><rect x="1003" y="507.2" width="9" height="5.5"/><rect x="1012" y="512.2" width="9" height="5.5"/><rect x="1021" y="517.2" width="9" height="5.5"/><rect x="1030" y="522.1" width="9" height="5.5"/><rect x="809.3" y="240" width="6" height="10"/><rect x="804.0" y="250" width="6" height="10"/><rect x="798.7" y="260" width="6" height="10"/><rect x="793.4" y="270" width="6" height="10"/><rect x="788.1" y="280" width="6" height="10"/><rect x="782.8" y="290" width="6" height="10"/><rect x="777.4" y="300" width="6" height="10"/><rect x="772.1" y="310" width="6" height="10"/><rect x="766.8" y="320" width="6" height="10"/><rect x="761.5" y="330" width="6" height="10"/><rect x="756.2" y="340" width="6" height="10"/><rect x="750.8" y="350" width="6" height="10"/><rect x="745.5" y="360" width="6" height="10"/><rect x="828.6" y="210" width="6" height="10.5"/><rect x="834" y="210" width="4" height="1"/><rect x="795" y="215.6" width="10" height="5"/><rect x="805" y="220.5" width="10" height="5"/><rect x="825.3" y="220.5" width="3.5" height="5"/><rect x="815.5" y="225.4" width="10" height="9"/><rect x="814" y="234.4" width="5.6" height="10.6"/><rect x="797" y="210" width="4" height="5.6"/></g>
<polygon points="486.0,210.0 792.0,210.0 785.0,227.0 809.0,240.0 742.0,366.0 1033.0,526.3 1033.0,729.7 962.4,857.0 486.0,857.0" fill="#c0bec1"/>
<g fill="none" stroke="#111" stroke-width="1.1">
<path d="M796 210L789 225L813 238L745.5 366"/>
<path d="M792 210L785 227L809 240L741.5 366"/>
</g>
<g stroke="#111" stroke-width="1.05" fill="none">
<line x1="543.0" y1="218.9" x2="556.0" y2="226.1"/>
<line x1="564.0" y1="230.5" x2="578.0" y2="238.3"/>
<line x1="584.0" y1="241.6" x2="597.0" y2="248.8"/>
<line x1="609.0" y1="255.5" x2="711.0" y2="312.1"/>
<line x1="491.0" y1="209.5" x2="516.0" y2="223.4"/>
<line x1="530.0" y1="231.2" x2="588.0" y2="263.3"/>
<line x1="486.0" y1="222.7" x2="742.0" y2="364.8"/>
<line x1="742.0" y1="364.8" x2="1033.0" y2="526.3"/>
<line x1="491.0" y1="244.0" x2="503.0" y2="250.7"/>
<line x1="515.0" y1="257.3" x2="749.0" y2="387.2"/>
<line x1="767.0" y1="397.2" x2="789.0" y2="409.4"/>
<line x1="809.0" y1="420.5" x2="831.0" y2="432.7"/>
<line x1="850.0" y1="443.3" x2="872.0" y2="455.5"/>
<line x1="893.0" y1="467.1" x2="915.0" y2="479.3"/>
<line x1="935.0" y1="490.4" x2="957.0" y2="502.6"/>
<line x1="975.0" y1="512.6" x2="997.0" y2="524.8"/>
<line x1="1016.0" y1="535.4" x2="1033.0" y2="544.8"/>
<line x1="497.0" y1="259.4" x2="539.0" y2="282.7"/>
<line x1="509.0" y1="276.3" x2="536.0" y2="291.3"/>
<line x1="532.0" y1="302.3" x2="586.0" y2="332.2"/>
<line x1="495.0" y1="528.7" x2="519.0" y2="542.0"/>
<line x1="578.0" y1="574.8" x2="602.0" y2="588.1"/>
<line x1="619.0" y1="597.5" x2="643.0" y2="610.9"/>
<line x1="660.0" y1="620.3" x2="684.0" y2="633.6"/>
<line x1="702.0" y1="643.6" x2="726.0" y2="656.9"/>
<line x1="744.0" y1="666.9" x2="768.0" y2="680.2"/>
<line x1="785.0" y1="689.7" x2="809.0" y2="703.0"/>
<line x1="826.0" y1="712.4" x2="850.0" y2="725.8"/>
<line x1="867.0" y1="735.2" x2="891.0" y2="748.5"/>
<line x1="910.0" y1="759.1" x2="934.0" y2="772.4"/>
<line x1="951.0" y1="781.8" x2="975.0" y2="795.1"/>
<line x1="486.0" y1="537.4" x2="550.0" y2="573.0"/>
<line x1="585.0" y1="592.4" x2="900.0" y2="767.2"/>
<line x1="987.0" y1="815.5" x2="1033.0" y2="841.0"/>
<line x1="486.0" y1="559.7" x2="510.0" y2="573.0"/>
<line x1="528.0" y1="583.0" x2="552.0" y2="596.4"/>
<line x1="570.0" y1="606.4" x2="594.0" y2="619.7"/>
<line x1="611.0" y1="629.1" x2="635.0" y2="642.4"/>
<line x1="654.0" y1="653.0" x2="678.0" y2="666.3"/>
<line x1="695.0" y1="675.7" x2="719.0" y2="689.0"/>
<line x1="736.0" y1="698.5" x2="760.0" y2="711.8"/>
<line x1="777.0" y1="721.2" x2="801.0" y2="734.6"/>
<line x1="819.0" y1="744.5" x2="843.0" y2="757.9"/>
<line x1="860.0" y1="767.3" x2="884.0" y2="780.6"/>
<line x1="943.0" y1="813.4" x2="967.0" y2="826.7"/>
<line x1="486.0" y1="582.7" x2="538.0" y2="611.6"/>
<line x1="935.0" y1="830.9" x2="973.0" y2="852.0"/>
<line x1="958.0" y1="789.7" x2="1033.0" y2="831.3"/>
<line x1="938.0" y1="802.6" x2="990.0" y2="831.5"/>
<line x1="880.0" y1="772.9" x2="921.0" y2="795.7"/>
<line x1="947.0" y1="819.6" x2="974.0" y2="834.6"/>
<line x1="951.0" y1="780.8" x2="992.0" y2="803.6"/>
<line x1="536.0" y1="552.0" x2="561.0" y2="565.9"/>
<line x1="542.0" y1="210.0" x2="514.8" y2="259.0"/>
<line x1="618.8" y1="210.0" x2="603.2" y2="238.0"/>
<line x1="666.2" y1="297.0" x2="647.3" y2="331.0"/>
<line x1="708.3" y1="295.0" x2="678.9" y2="348.0"/>
<line x1="545.9" y1="236.5" x2="486.3" y2="352.6"/>
<line x1="558.5" y1="210.3" x2="554.3" y2="218.7"/>
<line x1="563.2" y1="210.3" x2="556.4" y2="226.0"/>
<line x1="741.0" y1="365.0" x2="737.0" y2="379.0"/>
<line x1="1033.0" y1="729.7" x2="962.4" y2="857.0"/>
<line x1="546.4" y1="276.0" x2="532.3" y2="301.5"/>
<line x1="601.2" y1="306.0" x2="586.2" y2="333.0"/>
<line x1="573.9" y1="291.6" x2="559.2" y2="318.0"/>
<line x1="857.5" y1="381.0" x2="773.7" y2="532.0"/>
<line x1="763.8" y1="550.0" x2="762.6" y2="552.0"/>
<line x1="753.2" y1="569.0" x2="676.6" y2="707.0"/>
<line x1="665.5" y1="727.0" x2="664.4" y2="729.0"/>
<line x1="653.9" y1="748.0" x2="596.7" y2="851.0"/>
<line x1="522.0" y1="809.7" x2="597.0" y2="851.3"/>
<line x1="572.6" y1="525.0" x2="506.6" y2="644.0"/>
<line x1="1023.3" y1="704.0" x2="1008.8" y2="730.0"/>
<line x1="999.4" y1="747.0" x2="986.1" y2="771.0"/>
<line x1="976.1" y1="789.0" x2="963.3" y2="812.0"/>
<line x1="953.3" y1="830.0" x2="941.1" y2="852.0"/>
<line x1="964.0" y1="791.0" x2="949.6" y2="817.0"/>
<line x1="485.8" y1="528.6" x2="493.2" y2="531.9"/>
<line x1="493.2" y1="531.9" x2="489.9" y2="539.2"/>
<line x1="596.9" y1="249.1" x2="591.2" y2="258.9"/>
</g>
<path d="M648 325L656 315M647 317L657 323" stroke="#111" stroke-width="0.9"/>
<path d="M698 308L706 298M697 300L707 306" stroke="#111" stroke-width="0.9"/>
<path d="M684 341L692 331M683 333L693 339" stroke="#111" stroke-width="0.9"/>
<path d="M547 570L555 560M546 562L556 568" stroke="#111" stroke-width="0.9"/>
<path d="M543 576L551 566M542 568L552 574" stroke="#111" stroke-width="0.9"/>
<path d="M533 594L541 584M532 586L542 592" stroke="#111" stroke-width="0.9"/>
<path d="M524 611L532 601M523 603L533 609" stroke="#111" stroke-width="0.9"/>
<line x1="598" y1="284.89000000000004" x2="630" y2="302.65000000000003" stroke="#111" stroke-width="2.2"/>
<line x1="486" y1="222.73000000000002" x2="560" y2="263.8" stroke="#111" stroke-width="1.4"/>
<path d="M509 276.5L516 277.5L514 281Z" fill="#111"/>
<text transform="translate(646.2,295) rotate(-66) scale(0.6,1.2) skewX(-10)" font-family="Liberation Sans" font-size="19" fill="none" stroke="#111" stroke-width="1.7" text-anchor="middle" dominant-baseline="central" letter-spacing="12">0</text>
<text transform="translate(681.3,309.5) rotate(-66) scale(0.6,1.2) skewX(-10)" font-family="Liberation Sans" font-size="19" fill="none" stroke="#111" stroke-width="1.7" text-anchor="middle" dominant-baseline="central" letter-spacing="12">400</text>
<text transform="translate(547.8,529) rotate(-66) scale(0.6,1.2) skewX(-10)" font-family="Liberation Sans" font-size="19" fill="none" stroke="#111" stroke-width="1.7" text-anchor="middle" dominant-baseline="central" letter-spacing="12">100</text>
<text transform="translate(501.3,616) rotate(-66) scale(0.6,1.2) skewX(-10)" font-family="Liberation Sans" font-size="19" fill="none" stroke="#111" stroke-width="1.7" text-anchor="middle" dominant-baseline="central" letter-spacing="12">500</text>
<g fill="#000"><circle cx="522.5" cy="227.5" r="7.3"/><path d="M516 231L530 215L532 211L528 222Z"/><path d="M518 232L515 238L521 233Z"/><circle cx="491" cy="260.5" r="6.8"/><path d="M490 255L496 248L497 256Z"/>
<circle cx="929.5" cy="799.7" r="7"/><path d="M925 800L941 781L934 800ZM925 800L918 822L934 800Z"/></g>
<g fill="#18f0f6" stroke="#111" stroke-width="0.7"><path d="M546 276L571 290L549 286L532 301Z"/><path d="M574 292L600 305L577 301L559 318Z"/></g>
<g stroke="#1f2fb0" fill="none">
<path d="M491.3 392.1L535.4 417.3L519.7 445.7" stroke-width="0.9" stroke="#4a6ad0"/>
<line x1="486" y1="431" x2="546" y2="463.5" stroke-width="2.2"/>
<line x1="540.5" y1="447.8" x2="499.1" y2="522.3" stroke-width="2"/>
<path d="M535 455L547 462M543 451L538 462" stroke-width="1.2"/>
<line x1="856.4" y1="449" x2="816.1" y2="521.7" stroke-width="2.2"/>
<line x1="815.8" y1="521.7" x2="995.8" y2="622" stroke-width="2.2"/>
<line x1="842" y1="461" x2="1031" y2="560.4" stroke-width="0.8" stroke="#5b7fe0"/>
<path d="M1025 553L1031 560.4L1023 560" stroke-width="0.8" stroke="#5b7fe0"/>
<path d="M923.5 518.5V531M941.5 518.5V531M923.5 525H941.5" stroke-width="1.8"/>
<path d="M884 557L891 545L894 547L887 559Z" stroke-width="1.1"/>
</g>
<g fill="#4a68c8" stroke="#2a3fa0" stroke-width="0.6"><path d="M862 437L868 429L869 439Z"/><path d="M855 441L866 447L858 454Z"/></g>
<circle cx="815.8" cy="521.7" r="5" fill="#6a9ce0" stroke="#50709c" stroke-width="1.2"/>
<circle cx="995.8" cy="622" r="5" fill="#6a9ce0" stroke="#50709c" stroke-width="1.2"/>
<text transform="translate(949,496) rotate(29)" font-family="Liberation Sans" font-size="15" fill="#2a3fb8" text-anchor="middle" dominant-baseline="central" font-style="italic" stroke="#2a3fb8" stroke-width="0.3">2612</text>
<text transform="translate(502,419) rotate(29)" font-family="Liberation Sans" font-size="23" fill="#1f2fb0" text-anchor="middle" dominant-baseline="central" font-style="italic" stroke="#1f2fb0" stroke-width="0.6">1200</text>
</g></svg>
<div class="a" style="left:1021px;top:210px;width:12px;height:643px;background:linear-gradient(90deg,rgba(0,0,0,0),rgba(0,0,0,.05))"></div>
<div class="a" style="left:486px;top:851px;width:547px;height:2px;background:#e8e8e8"></div>
<div class="a" style="left:1033px;top:27px;width:707px;height:7px;background:#e4e5e0"></div>
<div class="a" style="left:1033px;top:33px;width:705px;height:824px;background:#eff6fc;border-left:1px solid #b8b8b8;border-top:1px solid #fbfbfb"></div>
<div class="a" style="left:1034px;top:34px;width:704px;height:23px;background:#eeeeee"></div>
<div class="a" style="left:1730px;top:57px;width:8px;height:796px;background:linear-gradient(90deg,#eef2f6,#e6e6e6)"></div><div class="a" style="left:1737px;top:34px;width:1px;height:819px;background:#a8a8a8"></div>
<div class="a" style="left:1738px;top:27px;width:2px;height:830px;background:#e8e8e8"></div>
<div class="a" style="left:1034px;top:853px;width:706px;height:4px;background:#f6f6f6"></div>
<span class="t" style="left:1036px;top:36px;font-size:14.7px">Reinforcement</span>
<svg style="left:1722px;top:37px" width="13" height="13" viewBox="0 0 13 13"><path d="M1 1L12 12M12 1L1 12" stroke="#1a1a1a" stroke-width="2.4" stroke-linecap="round"/></svg>
<div class="a" style="left:1043px;top:59px;width:166px;height:40px;background:#0698a8;border-radius:4px;box-shadow:0 1.5px 3px rgba(0,0,0,.35)"><div class="a" style="left:71px;top:11px;width:25px;height:20px;background:#e9f5f6;border-radius:3px"></div><span class="a" style="left:71px;top:15px;width:25px;text-align:center;font-size:10px;font-weight:bold;color:#0b7884;line-height:12px;letter-spacing:-0.3px">NEW</span></div>
<div class="a" style="left:1216px;top:59px;width:166px;height:40px;background:#0698a8;border-radius:4px;box-shadow:0 1.5px 3px rgba(0,0,0,.35)"><svg style="left:71px;top:8px" width="28" height="28" viewBox="0 0 28 28"><rect x="1.5" y="1.5" width="21" height="21" fill="none" stroke="#eaf6f7" stroke-width="2.4" stroke-dasharray="2.4 2.2"/><rect x="12" y="12" width="16" height="16" fill="#0698a8"/><circle cx="16" cy="17.5" r="4.2" fill="none" stroke="#eaf6f7" stroke-width="2.4"/><path d="M19 20.5L23.5 25" stroke="#eaf6f7" stroke-width="2.6" stroke-linecap="round"/></svg></div>
<div class="a" style="left:1389px;top:59px;width:166px;height:40px;background:#0698a8;border-radius:4px;box-shadow:0 1.5px 3px rgba(0,0,0,.35)"><div class="a" style="left:72px;top:9px;width:22px;height:23px;background:#e9f5f6;border-radius:3px"></div><div class="a" style="left:77px;top:19px;width:13px;height:3px;background:#0a8f9e"></div><div class="a" style="left:82px;top:14px;width:3px;height:13px;background:#0a8f9e"></div></div>
<div class="a" style="left:1561px;top:59px;width:166px;height:40px;background:#0698a8;border-radius:4px;box-shadow:0 1.5px 3px rgba(0,0,0,.35)"><div class="a" style="left:72px;top:9px;width:22px;height:23px;background:#e9f5f6;border-radius:3px"></div><div class="a" style="left:76px;top:19px;width:14px;height:3px;background:#0a8f9e"></div></div>
<div class="a" style="left:1048px;top:111.5px;width:36px;height:12px;border-radius:6px;background:#d3eef5"></div>
<div class="a" style="left:1063px;top:106.3px;width:22.4px;height:22.4px;border-radius:50%;background:#7dd6e7;box-shadow:0 1px 2px rgba(0,0,0,.25)"></div>
<span class="t" style="left:1094px;top:109.5px;font-size:15.2px">Режим копирования</span>
<div class="a" style="left:1048px;top:141.5px;width:36px;height:12px;border-radius:6px;background:#d3eef5"></div>
<div class="a" style="left:1063px;top:136.3px;width:22.4px;height:22.4px;border-radius:50%;background:#7dd6e7;box-shadow:0 1px 2px rgba(0,0,0,.25)"></div>
<span class="t" style="left:1094px;top:139.5px;font-size:15.2px">Режим обновления</span>
<span class="t" style="left:1059px;top:185px;font-size:15px">16</span>
<svg style="left:1149px;top:189px" width="10" height="5"><path d="M0 0H10L5 5Z" fill="#5d6670"/></svg>
<div class="a" style="left:1059px;top:208px;width:100px;height:1.2px;background:#5a5a5a"></div>
<span class="t" style="left:1172px;top:185px;font-size:15px">B500</span>
<svg style="left:1701px;top:189px" width="10" height="5"><path d="M0 0H10L5 5Z" fill="#5d6670"/></svg>
<div class="a" style="left:1171px;top:208px;width:540px;height:1.2px;background:#5a5a5a"></div>
<span class="t" style="left:1053px;top:249px;font-size:15px">Марка конструкции</span>
<div class="a" style="left:1604px;top:228px;width:120px;height:52px;border:4.5px solid #1cb04a"></div><div class="a" style="left:1613px;top:271px;width:100px;height:1.3px;background:#4a4a4a"></div><span class="t" style="left:1613px;top:248px;width:100px;text-align:center;font-size:15px">КЖ1.0</span>
<div class="a" style="left:1605px;top:284px;width:122px;height:60px;border:4.5px solid #e8171e"></div><div class="a" style="left:1613px;top:333px;width:100px;height:1.3px;background:#4a4a4a"></div><span class="t" style="left:1613px;top:311px;width:100px;text-align:center;font-size:15px">1</span>
<div class="a" style="left:1606px;top:351px;width:121px;height:49px;border:4.5px solid #3b40c4"></div><div class="a" style="left:1613px;top:389px;width:100px;height:1.3px;background:#4a4a4a"></div><span class="t" style="left:1613px;top:367px;width:100px;text-align:center;font-size:15px">2</span>
<div class="a" style="left:1056px;top:311.0px;width:17px;height:17px;border-radius:2px;background:#14b1c6"></div>
<svg style="left:1056px;top:311.0px" width="17" height="17"><path d="M3.8 8.8L7 12L13.2 5" stroke="#fff" stroke-width="1.7" fill="none"/></svg>
<span class="t" style="left:1081px;top:310.5px;font-size:15.2px">Марка изделия</span>
<div class="a" style="left:1056px;top:367.5px;width:17px;height:17px;border-radius:2px;background:#14b1c6"></div>
<svg style="left:1056px;top:367.5px" width="17" height="17"><path d="M3.8 8.8L7 12L13.2 5" stroke="#fff" stroke-width="1.7" fill="none"/></svg>
<span class="t" style="left:1081px;top:367px;font-size:15.2px">Альбом</span>
<div class="a" style="left:1043px;top:406px;width:68px;height:40px;background:#0698a8;border-radius:4px;box-shadow:0 1.5px 3px rgba(0,0,0,.35)"><svg style="left:22.5px;top:8px" width="26" height="26" viewBox="0 0 26 26"><circle cx="13" cy="13" r="11.3" fill="none" stroke="#fff" stroke-width="2.3"/><path d="M13 7.5V18.5M7.5 13H18.5" stroke="#fff" stroke-width="2.3"/></svg></div>
<div class="a" style="left:1043px;top:454px;width:68px;height:40px;background:#0698a8;border-radius:4px;box-shadow:0 1.5px 3px rgba(0,0,0,.35)"><svg style="left:22px;top:15px" width="28" height="12" viewBox="0 0 28 12"><circle cx="4" cy="6" r="3.2" fill="#fff"/><path d="M5 6H26" stroke="#fff" stroke-width="2.6"/></svg></div>
<div class="a" style="left:1043px;top:501px;width:68px;height:40px;background:#0698a8;border-radius:4px;box-shadow:0 1.5px 3px rgba(0,0,0,.35)"><svg style="left:22px;top:10px" width="26" height="22" viewBox="0 0 26 22"><path d="M2 17L10 9.5L14.5 13.5L24 4.5" stroke="#fff" stroke-width="2.8" fill="none" stroke-linejoin="miter"/></svg></div>
<div class="a" style="left:1662px;top:409px;width:63px;height:40px;background:#0cb9d5;border-radius:4px;box-shadow:0 1.5px 3px rgba(0,0,0,.35)"><svg style="left:25px;top:13px" width="13" height="13"><path d="M6.5 0.5V12.5M0.5 6.5H12.5" stroke="#1a1a1a" stroke-width="1.7"/></svg></div>
<div class="a" style="left:1662px;top:461px;width:63px;height:40px;background:#0cb9d5;border-radius:4px;box-shadow:0 1.5px 3px rgba(0,0,0,.35)"><svg style="left:22px;top:10px" width="19" height="19"><circle cx="9.5" cy="9.5" r="7.6" fill="none" stroke="#1a1a1a" stroke-width="1.7"/><path d="M9.5 5V14M5 9.5H14" stroke="#1a1a1a" stroke-width="1.7"/></svg></div>
<div class="a" style="left:1662px;top:515px;width:63px;height:40px;background:#0cb9d5;border-radius:4px;box-shadow:0 1.5px 3px rgba(0,0,0,.35)"><div class="a" style="left:25px;top:19px;width:13px;height:2px;background:#1a1a1a"></div></div>
<div class="a" style="left:1662px;top:566px;width:63px;height:40px;background:#0cb9d5;border-radius:4px;box-shadow:0 1.5px 3px rgba(0,0,0,.35)"><span class="a" style="left:0;top:17px;width:63px;text-align:center;font-size:14px;line-height:14px;color:#1a1a1a">...</span></div>
<div class="a" style="left:1662px;top:619px;width:63px;height:40px;background:#0cb9d5;border-radius:4px;box-shadow:0 1.5px 3px rgba(0,0,0,.35)"><svg style="left:24px;top:13px" width="15" height="14"><path d="M0 1.5H15M0 5.2H15M0 8.9H15M0 12.6H15" stroke="#1a1a1a" stroke-width="1.6"/></svg></div>
<div class="a" style="left:1629px;top:410px;width:21px;height:21px;background:#e6e9ec"></div>
<svg style="left:1634px;top:414px" width="11" height="12"><path d="M5.5 11V1.5M1.5 5.5L5.5 1.5L9.5 5.5" stroke="#a6a6a6" stroke-width="1.3" fill="none"/></svg>
<div class="a" style="left:1629px;top:431px;width:21px;height:32px;background:#c3c4c6"></div>
<div class="a" style="left:1629px;top:764px;width:21px;height:21px;background:#e6e9ec"></div>
<svg style="left:1634px;top:768px" width="11" height="12"><path d="M5.5 1V10.5M1.5 6.5L5.5 10.5L9.5 6.5" stroke="#a6a6a6" stroke-width="1.3" fill="none"/></svg>
<div class="a" style="left:1121px;top:518px;width:507px;height:108px;background:#e6edf5"></div>
<span class="t" style="left:1141px;top:455px;font-size:14.5px">1</span>
<div class="a" style="left:1156px;top:423px;width:161px;height:82px;background:#fff"></div>
<div class="a" style="left:1180px;top:462.5px;width:105px;height:3px;background:#0d0d0d"></div>
<span class="t" style="left:1141px;top:565px;font-size:14.5px">11</span>
<div class="a" style="left:1163px;top:532px;width:150px;height:81px;background:#fff"></div>
<svg style="left:1163px;top:532px" width="150" height="81"><path d="M18.5 64.5H113Q118.5 64.5 118.5 59V10.5" stroke="#0d0d0d" stroke-width="2.6" fill="none"/></svg>
<span class="t" style="left:1141px;top:674px;font-size:14.5px">15</span>
<div class="a" style="left:1163px;top:641px;width:162px;height:81px;background:#fff"></div>
<svg style="left:1163px;top:641px" width="162" height="81"><path d="M21.5 67.5H110.5L139.5 15.5" stroke="#0d0d0d" stroke-width="2.4" fill="none"/></svg>
<div class="a" style="left:1163px;top:750px;width:145px;height:35px;background:#fff"></div>
<svg style="left:1163px;top:750px" width="145" height="35"><path d="M105 8.5L112.5 35" stroke="#0d0d0d" stroke-width="2.6" fill="none"/></svg>
<div class="a" style="left:1038px;top:808px;width:695px;height:37px;border:5px solid #c6b9e4;background:#f0f7fd"></div>
<span class="t" style="left:1063px;top:816px;font-size:14.4px">5400502</span>
</body></html>
